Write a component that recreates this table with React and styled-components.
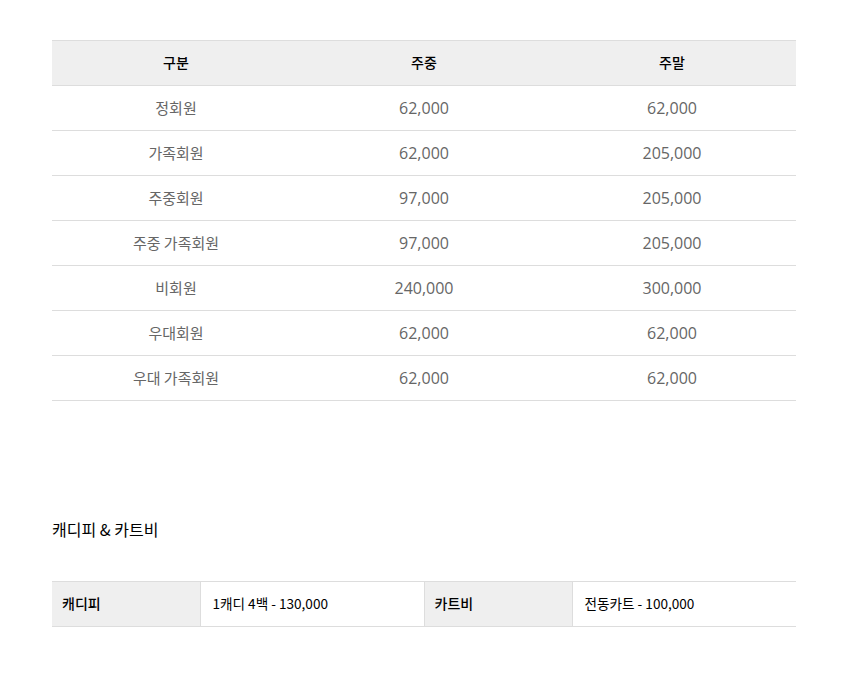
import React from 'react'
import styled, { createGlobalStyle } from 'styled-components'

const GlobalStyle = createGlobalStyle`
  body {
    margin: 0;
    background: #fff;
    font-family: "Noto Sans CJK KR", "Noto Sans", sans-serif;
  }
`;

const Page = styled.div`
  width: 744px;
  padding: 40px 0 0 52px;
`;

const FeeTable = styled.table`
  width: 100%;
  border-collapse: collapse;
  table-layout: fixed;
  border-top: 1px solid #ddd;
  th {
    height: 41px;
    background: #efefef;
    color: #000;
    font-size: 14px;
    font-weight: 500;
    line-height: 20px;
    text-align: center;
    border-bottom: 1px solid #ddd;
    padding: 0 0 3px;
  }
  td {
    height: 43px;
    color: #666;
    font-size: 15px;
    line-height: 20px;
    text-align: center;
    border-bottom: 1px solid #ddd;
    padding: 0 0 1px;
  }
`;

const Num = styled.span`
  font-family: "Open Sans", "Noto Sans CJK KR", sans-serif;
  font-size: 16px;
  line-height: 20px;
  color: #666;
`;

const Title = styled.h3`
  margin: 118px 0 0;
  font-size: 16px;
  font-weight: 400;
  color: #000;
  line-height: 20px;
`;

const InfoTable = styled.table`
  width: 100%;
  margin-top: 42px;
  border-collapse: collapse;
  table-layout: fixed;
  border-top: 1px solid #ddd;
  th, td {
    height: 42px;
    line-height: 20px;
    text-align: left;
    border-bottom: 1px solid #ddd;
    color: #000;
  }
  th {
    background: #efefef;
    font-size: 14px;
    font-weight: 500;
    padding: 0 0 2px 10px;
    border-right: 1px solid #ddd;
  }
  td {
    font-size: 13.6px;
    padding: 0 0 2px 12px;
  }
  td + th {
    border-left: 1px solid #ddd;
  }
`;

const Col = styled.col`
  width: ${p => p.$w}px;
`;

const rows = [
  ['정회원', '62,000', '62,000'],
  ['가족회원', '62,000', '205,000'],
  ['주중회원', '97,000', '205,000'],
  ['주중 가족회원', '97,000', '205,000'],
  ['비회원', '240,000', '300,000'],
  ['우대회원', '62,000', '62,000'],
  ['우대 가족회원', '62,000', '62,000'],
];

export default function App() {
  return (
    <Page>
      <GlobalStyle />
      <FeeTable>
        <thead>
          <tr>
            <th>구분</th>
            <th>주중</th>
            <th>주말</th>
          </tr>
        </thead>
        <tbody>
          {rows.map(r => (
            <tr key={r[0]}>
              <td>{r[0]}</td>
              <td><Num>{r[1]}</Num></td>
              <td><Num>{r[2]}</Num></td>
            </tr>
          ))}
        </tbody>
      </FeeTable>
      <Title>캐디피 &amp; 카트비</Title>
      <InfoTable>
        <colgroup>
          <Col $w={148} />
          <Col $w={224} />
          <Col $w={148} />
          <Col $w={224} />
        </colgroup>
        <tbody>
          <tr>
            <th>캐디피</th>
            <td>1캐디 4백 - 130,000</td>
            <th>카트비</th>
            <td>전동카트 - 100,000</td>
          </tr>
        </tbody>
      </InfoTable>
    </Page>
  );
}
